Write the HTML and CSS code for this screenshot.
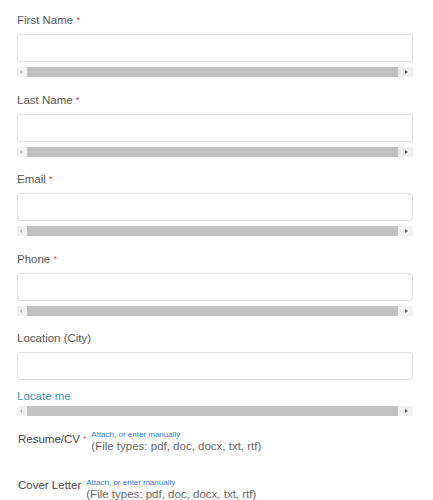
FILE: index.html
```html
<!DOCTYPE html>
<html lang="en">
<head>
  <meta charset="UTF-8" />
  <meta name="viewport" content="width=device-width, initial-scale=1.0"/>
  <title>Application</title>
  <link rel="stylesheet" href="styles.css">
</head>
<body>
  <form class="app-form">
    <div class="field">
      <label class="field-label">First Name <span class="req">*</span></label>
      <div class="text-input"></div>
      <div class="hscroll"><span class="arrow left"></span><span class="thumb"></span><span class="arrow right"></span></div>
    </div>

    <div class="field">
      <label class="field-label">Last Name <span class="req">*</span></label>
      <div class="text-input"></div>
      <div class="hscroll"><span class="arrow left"></span><span class="thumb"></span><span class="arrow right"></span></div>
    </div>

    <div class="field">
      <label class="field-label">Email <span class="req">*</span></label>
      <div class="text-input"></div>
      <div class="hscroll"><span class="arrow left"></span><span class="thumb"></span><span class="arrow right"></span></div>
    </div>

    <div class="field">
      <label class="field-label">Phone <span class="req">*</span></label>
      <div class="text-input"></div>
      <div class="hscroll"><span class="arrow left"></span><span class="thumb"></span><span class="arrow right"></span></div>
    </div>

    <div class="field">
      <label class="field-label">Location (City)</label>
      <div class="text-input"></div>
      <a class="locate" href="#">Locate me</a>
      <div class="hscroll tight"><span class="arrow left"></span><span class="thumb"></span><span class="arrow right"></span></div>
    </div>

    <div class="upload resume">
      <label class="upload-label">Resume/CV <span class="req">*</span></label>
      <div class="upload-body">
        <a class="attach" href="#">Attach, or enter manually</a>
        <span class="file-types">(File types: pdf, doc, docx, txt, rtf)</span>
      </div>
    </div>

    <div class="upload cover">
      <label class="upload-label">Cover Letter</label>
      <div class="upload-body">
        <a class="attach" href="#">Attach, or enter manually</a>
        <span class="file-types">(File types: pdf, doc, docx, txt, rtf)</span>
      </div>
    </div>
  </form>
</body>
</html>
```

FILE: styles.css
```css
body {
  font-family: 'Liberation Sans', Arial, sans-serif;
  background-color: #ffffff;
  color: #555;
  margin: 0;
  padding: 0 20px 0 17px;
}

.app-form {
  width: 396px;
  padding-top: 11px;
}

.field {
  margin-bottom: 13.6px;
}

.field-label {
  display: block;
  font-size: 11.5px;
  line-height: 18px;
  color: #555;
  margin-bottom: 5px;
}

.req {
  color: #d9364a;
  font-size: 9px;
  vertical-align: top;
}

.text-input {
  height: 26px;
  border: 1px solid #e2e2e2;
  border-radius: 3px;
  background: #fff;
}

.hscroll {
  display: flex;
  align-items: center;
  height: 10px;
  margin-top: 5px;
  background: #f1f1f1;
}

.hscroll.tight {
  margin-top: 2px;
}

.hscroll .thumb {
  flex: 1;
  height: 10px;
  background: #c1c1c1;
}

.arrow {
  width: 10px;
  height: 10px;
  position: relative;
}

.arrow.right {
  width: 15px;
}

.arrow::after {
  content: '';
  position: absolute;
  top: 3px;
  border-top: 2px solid transparent;
  border-bottom: 2px solid transparent;
}

.arrow.left::after {
  left: 3px;
  border-right: 2px solid #b0b0b0;
}

.arrow.right::after {
  left: 7px;
  border-left: 3px solid #606060;
}

.locate {
  display: block;
  margin-top: 8px;
  font-size: 11.5px;
  line-height: 16px;
  color: #3a9bb1;
  text-decoration: none;
}

.upload {
  display: flex;
  align-items: flex-start;
  gap: 5px;
  padding-left: 1px;
}

.upload.resume {
  margin-top: 12px;
}

.upload.cover {
  margin-top: 26px;
}

.upload-label {
  font-size: 11.5px;
  line-height: 14px;
  color: #444;
  margin-top: 2px;
  white-space: nowrap;
}

.upload.cover .upload-label {
  margin-top: 0;
}

.upload-label .req {
  font-size: 8px;
}

.upload-body {
  display: flex;
  flex-direction: column;
}

.attach {
  font-size: 8px;
  line-height: 10px;
  color: #2f7fd8;
  text-decoration: none;
}

.file-types {
  font-size: 11.5px;
  line-height: 12px;
  color: #666;
}
```
